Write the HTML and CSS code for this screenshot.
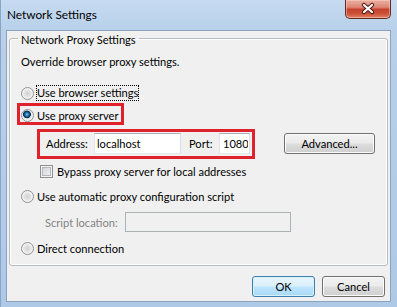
FILE: index.html
```html
<!DOCTYPE html>
<html lang="en">
<head>
  <meta charset="UTF-8" />
  <title>Network Settings</title>
  <link rel="stylesheet" href="styles.css">
</head>
<body>
  <div class="window">
    <div class="titlebar">
      <span class="title">Network Settings</span>
      <span class="close">
        <svg width="44" height="17" viewBox="0 0 44 17">
          <path d="M18 5 L26 12 M26 5 L18 12" stroke="#4a1a12" stroke-width="4.2" stroke-linecap="round" />
          <path d="M18 5 L26 12 M26 5 L18 12" stroke="#ffffff" stroke-width="2.2" stroke-linecap="round" />
        </svg>
      </span>
    </div>

    <div class="client">
      <fieldset class="group">
        <legend>Network Proxy Settings</legend>
        <p class="desc">Override browser proxy settings.</p>

        <div class="option first"><span class="radio"></span><span class="focus">Use browser settings</span></div>
        <div class="option tight"><span class="radio checked"></span>Use proxy server</div>

        <div class="proxy-row">
          <span class="addr-label">Address:</span>
          <input class="field addr" type="text" value="localhost" />
          <span class="port-label">Port:</span>
          <input class="field port" type="text" value="1080" />
          <button class="button advanced">Advanced...</button>
        </div>

        <div class="option bypass"><span class="check"></span>Bypass proxy server for local addresses</div>
        <div class="option"><span class="radio"></span>Use automatic proxy configuration script</div>

        <div class="script-row">
          <span class="script-label">Script location:</span>
          <input class="field script" type="text" disabled />
        </div>

        <div class="option"><span class="radio"></span>Direct connection</div>
      </fieldset>

      <div class="actions">
        <button class="button default">OK</button>
        <button class="button">Cancel</button>
      </div>
    </div>

    <div class="mark mark-proxy"></div>
    <div class="mark mark-address"></div>
  </div>
</body>
</html>
```

FILE: styles.css
```css
body {
  margin: 0;
  font-family: 'Lato', 'Liberation Sans', sans-serif;
  font-size: 11.1px;
  color: #000;
}
.window {
  position: relative;
  width: 397px;
  height: 307px;
  overflow: hidden;
  background: linear-gradient(to bottom, #c6dbf1 0, #b8d0ea 30px, #aec9e7 100%);
  box-shadow: inset 1px 0 0 #8aa6c6;
}
.titlebar {
  display: flex;
  align-items: flex-start;
  height: 30px;
}
.title {
  padding: 8px 0 0 7px;
  font-size: 11.8px;
  line-height: 14px;
}
.close {
  margin-left: auto;
  margin-right: 6px;
  width: 46px;
  height: 19px;
  box-sizing: border-box;
  border: 1px solid #5e2a22;
  border-top: none;
  border-radius: 0 0 5px 5px;
  background: linear-gradient(to bottom, #eab0a2 0, #dd8672 40%, #c5422e 52%, #cd5438 78%, #e3876a 100%);
  box-shadow: inset 0 0 0 1px rgba(255, 210, 200, 0.5);
}
.close svg { display: block; }

.client {
  margin-left: 6px;
  width: 385px;
  height: 272px;
  box-sizing: border-box;
  border: 1px solid #8ca3bd;
  background: #f0f0f0;
}
.group {
  margin: -1px 2px 0;
  padding: 0 8px 9px;
  border: 1px solid #b6bcc2;
  border-radius: 3px;
  box-shadow: inset 0 0 0 1px #fff;
  min-inline-size: 0;
}
.group legend {
  padding: 4px 3px 0;
  line-height: 12px;
}
.desc {
  margin: 8px 0 0 3px;
  line-height: 15px;
}
.option {
  display: flex;
  align-items: center;
  height: 16px;
  margin: 9px 0 0 3px;
}
.option.first { margin-top: 16px; }
.option.tight { margin-top: 6px; }
.option.bypass { margin-left: 22px; }
.option:last-child { margin-top: 8px; }

.radio {
  width: 13px;
  height: 13px;
  margin-right: 3px;
  box-sizing: border-box;
  border-radius: 50%;
  border: 1px solid #929292;
  background: radial-gradient(circle at 50% 50%, #d2d2d2 0, #e2e2e2 3px, #f6f6f6 5.5px);
}
.radio.checked {
  background:
    radial-gradient(circle at 45% 40%, #8ad3f6 0, #2a7fb8 1.5px, #0c3e66 3px, #0a2f50 3.6px, transparent 4.2px),
    radial-gradient(circle at 50% 50%, #d2d2d2 0, #e2e2e2 3px, #f6f6f6 5.5px);
}
.check {
  width: 13px;
  height: 13px;
  margin-right: 4px;
  box-sizing: border-box;
  border: 1px solid #8e8f8f;
  background: linear-gradient(135deg, #cbcfd5, #f6f6f6);
  box-shadow: inset 0 0 0 1px #f4f4f4, inset 0 0 0 2px #b3b8be;
}
.focus {
  line-height: 14px;
  outline: 1px dotted #000;
}

.proxy-row,
.script-row {
  display: flex;
  align-items: center;
}
.proxy-row {
  height: 21px;
  margin: 10px 0 0 28px;
}
.addr-label { width: 48px; }
.port-label { width: 30px; margin-left: 8px; }
.field {
  height: 21px;
  box-sizing: border-box;
  margin: 0;
  padding: 0 2px;
  border: 1px solid;
  border-color: #abadb3 #dbdfe6 #e3e9ef #e2e3ea;
  background: #fff;
  font: inherit;
  color: #000;
}
.field.addr { width: 87px; }
.field.port { width: 31px; padding: 0 1px 0 3px; }
.script-row {
  height: 20px;
  margin: 8px 0 0 27px;
}
.script-label {
  width: 80px;
  color: #838383;
}
.field.script {
  width: 166px;
  height: 20px;
  border-color: #adb2b5;
  background: #f0f0f0;
}

.button {
  height: 21px;
  box-sizing: border-box;
  margin: 0;
  padding: 0;
  border: 1px solid #707070;
  border-radius: 3px;
  background: linear-gradient(to bottom, #f2f2f2 0, #ebebeb 48%, #dddddd 52%, #cfcfcf 100%);
  box-shadow: inset 0 0 0 1px #fcfcfc;
  font: inherit;
  color: #000;
}
.button.advanced {
  width: 91px;
  margin-left: 34px;
}
.button.default {
  border-color: #3c7fb1;
  background: linear-gradient(to bottom, #eaf6fd 0, #d9f0fc 48%, #bee6fd 52%, #a7d9f5 100%);
  box-shadow: inset 0 0 0 1px #d6f0fc;
}
.actions {
  display: flex;
  justify-content: flex-end;
  gap: 7px;
  margin-top: 10px;
  padding-right: 5px;
}
.actions .button { width: 63px; }

.mark {
  position: absolute;
  box-sizing: border-box;
  border: 3px solid #e0222d;
}
.mark-proxy {
  left: 17px;
  top: 103px;
  width: 107px;
  height: 22px;
}
.mark-address {
  left: 37px;
  top: 129px;
  width: 218px;
  height: 30px;
}
```
